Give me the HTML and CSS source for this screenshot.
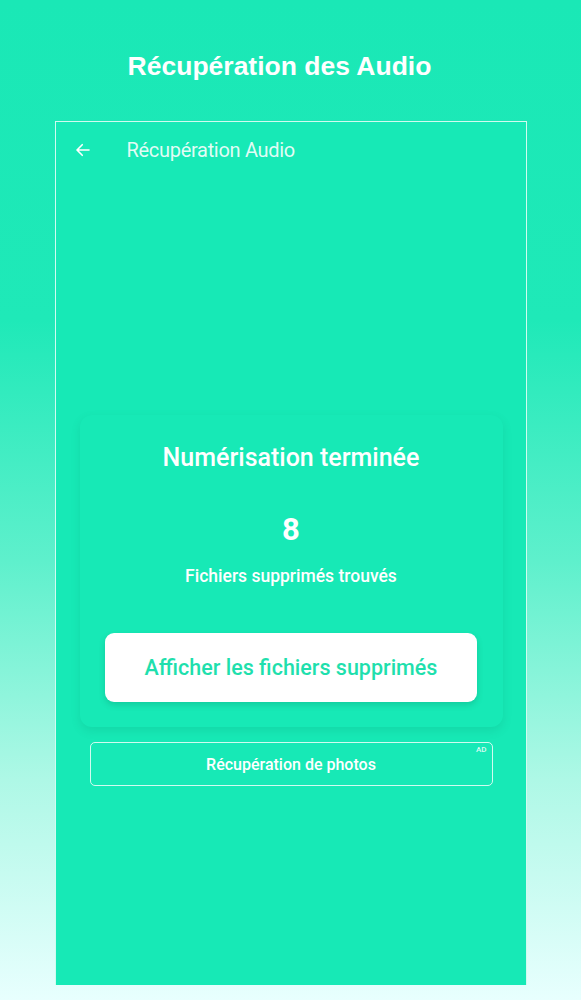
FILE: index.html
```html
<!DOCTYPE html>
<html lang="fr">
<head>
    <meta charset="UTF-8">
    <meta name="viewport" content="width=device-width, initial-scale=1.0">
    <title>Récupération des Audio</title>
    <link rel="stylesheet" href="styles.css">
</head>
<body>
    <h1 class="headline">Récupération des Audio</h1>

    <div class="phone">
        <div class="toolbar">
            <svg class="back" width="18" height="18" viewBox="0 0 24 24">
                <path d="M20 12H5M11 5l-7 7 7 7" fill="none" stroke="#fff" stroke-width="2.2" stroke-linecap="round" stroke-linejoin="round"/>
            </svg>
            <span class="toolbar-title">Récupération Audio</span>
        </div>

        <div class="content">
            <div class="result-card">
                <h2>Numérisation terminée</h2>
                <div class="count">8</div>
                <p>Fichiers supprimés trouvés</p>
                <button class="show-btn">Afficher les fichiers supprimés</button>
            </div>

            <div class="ad-btn">
                <span>Récupération de photos</span>
                <small class="ad-tag">AD</small>
            </div>
        </div>
    </div>
</body>
</html>
```

FILE: styles.css
```css
html, body {
    height: 100%;
}

body {
    margin: 0;
    font-family: Roboto, "Noto Sans", sans-serif;
    color: #fff;
    background: linear-gradient(to bottom, #1ae8b6 0%, #1fe9b8 32%, #5ef0cc 56%, #aef8e6 78%, #e8fffe 100%);
    display: flex;
    flex-direction: column;
    align-items: center;
}

.headline {
    font-family: "Liberation Sans", Arial, sans-serif;
    font-size: 26.5px;
    font-weight: bold;
    margin: 51px 0 0 -22px;
    line-height: 31px;
}

.phone {
    box-sizing: border-box;
    width: 472px;
    height: 864px;
    margin: 39px 0 0 0;
    background-color: #17e9b6;
    border: 1.5px solid rgba(255, 255, 255, 0.8);
    border-bottom: none;
    border-right-width: 1px;
    display: flex;
    flex-direction: column;
}

.toolbar {
    display: flex;
    align-items: center;
    height: 56px;
    padding: 0 0 0 18px;
}

.back {
    flex-shrink: 0;
}

.toolbar-title {
    margin-left: 35px;
    font-size: 20px;
    color: rgba(255, 255, 255, 0.88);
    letter-spacing: -0.3px;
}

.content {
    padding: 237px 23px 0 24px;
    display: flex;
    flex-direction: column;
    align-items: center;
}

.result-card {
    box-sizing: border-box;
    width: 423px;
    height: 312px;
    border-radius: 12px;
    background-color: #17e9b6;
    box-shadow: 0 4px 10px rgba(0, 110, 80, 0.13);
    display: flex;
    flex-direction: column;
    align-items: center;
    padding-top: 27px;
}

.result-card h2 {
    margin: 0;
    font-size: 25px;
    font-weight: 500;
    line-height: 32px;
}

.count {
    margin-top: 38px;
    font-size: 31px;
    font-weight: bold;
    line-height: 36px;
}

.result-card p {
    margin: 17px 0 0;
    font-size: 17.5px;
    font-weight: 500;
    line-height: 22px;
}

.show-btn {
    margin-top: 46px;
    width: 372px;
    height: 69px;
    border: none;
    border-radius: 9px;
    background-color: #fff;
    color: #1fdfad;
    font-family: Roboto, "Noto Sans", sans-serif;
    font-size: 21.5px;
    font-weight: 500;
    box-shadow: 0 3px 6px rgba(0, 90, 60, 0.2);
    padding: 0;
}

.ad-btn {
    position: relative;
    box-sizing: border-box;
    margin-top: 15px;
    width: 403px;
    height: 44px;
    border: 1.5px solid rgba(255, 255, 255, 0.8);
    border-radius: 5px;
    display: flex;
    align-items: center;
    justify-content: center;
    font-size: 16px;
    font-weight: 500;
}

.ad-tag {
    position: absolute;
    top: 2px;
    right: 5px;
    font-size: 8px;
    color: rgba(255, 255, 255, 0.85);
}
```
